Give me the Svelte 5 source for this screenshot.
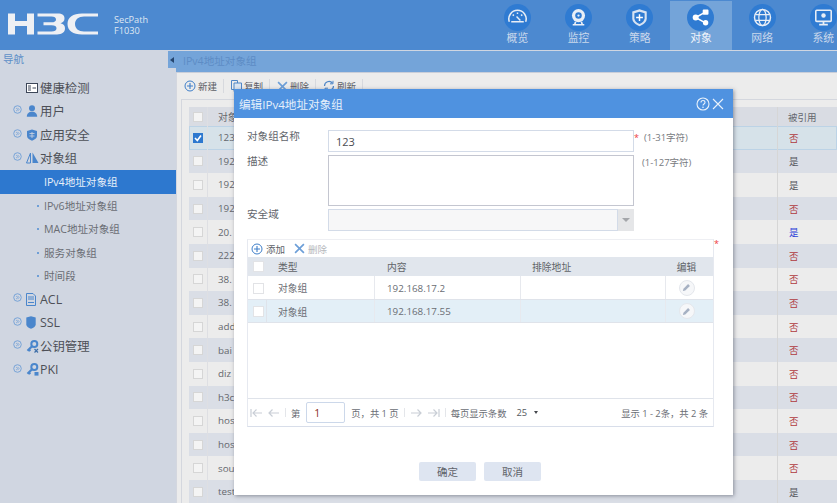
<script>
  const navItems = ['概览', '监控', '策略', '对象', '网络', '系统'];
  const rows = [
    ['123', '否', 'r'], ['192', '是', 'g'], ['192', '是', 'g'], ['192', '否', 'r'],
    ['20.', '是', 'b'], ['222', '否', 'r'], ['38.', '否', 'r'], ['38.', '否', 'r'],
    ['add', '否', 'r'], ['bai', '否', 'r'], ['diz', '否', 'r'], ['h3c', '否', 'r'],
    ['hos', '否', 'r'], ['hos', '否', 'r'], ['sou', '否', 'r'], ['test', '是', 'g']
  ];
  const subs = ['IPv6地址对象组', 'MAC地址对象组', '服务对象组', '时间段'];
  const lower = ['ACL', 'SSL', '公钥管理', 'PKI'];
  const inner = [['对象组', '192.168.17.2'], ['对象组', '192.168.17.55']];
</script>

{#snippet expander()}
  <svg class="exp" viewBox="0 0 10 10" width="9" height="9">
    <circle cx="5" cy="5" r="4.2" fill="none" stroke="#6f9fd6" stroke-width="1" />
    <path d="M3.4 3.2 5.2 5 3.4 6.8M5 3.2 6.8 5 5 6.8" fill="none" stroke="#6f9fd6" stroke-width=".8" />
  </svg>
{/snippet}

{#snippet plus()}
  <svg viewBox="0 0 12 12" width="12" height="12">
    <circle cx="6" cy="6" r="5" fill="none" stroke="#3f7fc9" stroke-width="1" />
    <path d="M3 6h6M6 3v6" stroke="#3f7fc9" stroke-width="1.1" />
  </svg>
{/snippet}

{#snippet cross()}
  <svg viewBox="0 0 10 10" width="11" height="11">
    <path d="M1 1l8 8M9 1l-8 8" stroke="#6d9fd8" stroke-width="1.5" />
  </svg>
{/snippet}

{#snippet navIcon(i)}
  <svg viewBox="0 0 28 28" width="27" height="27">
    <circle cx="14" cy="14" r="14" fill="#2f7bd2" />
    {#if i === 0}
      <path d="M5.5 18.5a9 9 0 1 1 17 0M7.5 18.5h13" fill="none" stroke="#e8eef6" stroke-width="1.6" />
      <path d="M13 13l4 4M9 11l1.3 1.1M14 8.8v1.6M19 11l-1.3 1.1" stroke="#e8eef6" stroke-width="1.5" />
    {:else if i === 1}
      <circle cx="14" cy="12" r="6.8" fill="#e8eef6" />
      <circle cx="14" cy="12" r="3.4" fill="#2f7bd2" />
      <circle cx="14" cy="12" r="1.2" fill="#e8eef6" />
      <path d="M8 21.5h12M11 18.5l-1 3M17 18.5l1 3" stroke="#e8eef6" stroke-width="1.7" />
    {:else if i === 2}
      <path d="M14 5.5l7.5 2.2v7c0 4-3.3 6.500-7.500 8.300-4.200-1.800-7.500-4.300-7.500-8.300v-7z" fill="#d7e3f2" />
      <path d="M14 8l5.300 1.500v5.200c0 2.800-2.300 4.600-5.300 6-3-1.400-5.300-3.200-5.300-6V9.500z" fill="#2f7bd2" />
      <path d="M10.500 14h7M14 10.500v7" stroke="#fff" stroke-width="1.500" />
    {:else if i === 3}
      <path d="M9 14l10-5.500M9 14l10 5.500" stroke="#fff" stroke-width="1.500" />
      <circle cx="9" cy="14" r="3.100" fill="#fff" />
      <rect x="16.300" y="5.800" width="6" height="5.400" rx="1" fill="#fff" />
      <circle cx="19.300" cy="19.500" r="2.800" fill="#fff" />
    {:else if i === 4}
      <circle cx="14" cy="14" r="8.300" fill="none" stroke="#e8eef6" stroke-width="1.500" />
      <ellipse cx="14" cy="14" rx="3.800" ry="8.300" fill="none" stroke="#e8eef6" stroke-width="1.300" />
      <path d="M6.500 11h15M6.500 17h15" stroke="#e8eef6" stroke-width="1.300" />
    {:else}
      <rect x="6" y="6.500" width="16" height="11.500" rx="1" fill="none" stroke="#e8eef6" stroke-width="1.600" />
      <circle cx="14" cy="12" r="2.300" fill="#e8eef6" />
      <path d="M14 18v3M9.500 21.500h9" stroke="#e8eef6" stroke-width="1.800" />
    {/if}
  </svg>
{/snippet}

<div class="page">
  <header class="top">
    <div class="brand">
      <svg class="logo" viewBox="0 0 90 22" width="90" height="22" role="img" aria-label="H3C">
        <path fill="#eef0f4" d="M0 .5h7v7.500h12V.5h7v21h-7v-8.500H7v8.500H0z" />
        <path fill="#eef0f4" transform="translate(-1.500 0)" d="M31 .500h20c5 0 7 1.800 7 5 0 2.400-1.500 4-4 4.800 3 .600 4.500 2.300 4.500 5 0 4-3 6.200-8 6.200H31v-3h14c3 0 5-1 5-3.200 0-2-1.500-3-5-3H37v-3h8c3 0 4.500-.900 4.500-2.800 0-1.900-1.600-2.900-4.500-2.900H31z" />
        <path fill="#eef0f4" d="M90 .500H74c-9 0-14.500 4-14.500 10.500S65 21.500 74 21.500h16v-3H76c-5.500 0-9-3-9-7.500s3.500-7.500 9-7.500h14z" />
      </svg>
      <div class="model"><span>SecPath</span><span>F1030</span></div>
    </div>
    <nav class="nav">
      {#each navItems as item, i}
        <div class="nav-item" class:active={i === 3}>
          {@render navIcon(i)}
          <span>{item}</span>
        </div>
      {/each}
    </nav>
  </header>

  <div class="body">
    <aside class="side">
      <div class="side-title">导航</div>
      <ul class="menu">
        <li class="top-item">
          <span class="exp-slot"></span>
          <svg class="mi" viewBox="0 0 12 10" width="12" height="10"><rect x=".5" y=".5" width="11" height="9" fill="#fff" stroke="#3c4658" /><path d="M2 3h3M2 5h3M2 7h3M6.500 5h3.500" stroke="#3c4658" /></svg>
          <span>健康检测</span>
        </li>
        <li class="top-item">
          {@render expander()}
          <svg class="mi" viewBox="0 0 12 12" width="12" height="12"><circle cx="6" cy="3.300" r="3" fill="#4a86cc" /><path d="M.8 11.800c0-3 2-5 5.200-5s5.200 2 5.200 5z" fill="#4a86cc" /></svg>
          <span>用户</span>
        </li>
        <li class="top-item">
          {@render expander()}
          <svg class="mi" viewBox="0 0 12 12" width="12" height="12"><path d="M6 .500l5 1.500v5c0 2.200-2.200 3.600-5 4.700C3.200 10.600 1 9.200 1 7V2z" fill="#4a86cc" /><path d="M3.500 4.500h5M3.500 7h5M6 3v6" stroke="#d0d6e1" stroke-width=".8" /></svg>
          <span>应用安全</span>
        </li>
        <li class="top-item">
          {@render expander()}
          <svg class="mi" viewBox="0 0 13 12" width="13" height="12"><path d="M4.500 1v10H.500z" fill="none" stroke="#4a86cc" /><path d="M6.500 .500l6 10.500h-6z" fill="#4a86cc" /></svg>
          <span>对象组</span>
        </li>
        <li class="sub selected">IPv4地址对象组</li>
        {#each subs as s}
          <li class="sub"><i class="dot"></i>{s}</li>
        {/each}
        {#each lower as item, i}
          <li class="top-item">
            {@render expander()}
            {#if i === 0}
              <svg class="mi" viewBox="0 0 10 13" width="10" height="13"><path d="M.5.500h6.500l2.500 2.500v9.500H.5z" fill="none" stroke="#4a86cc" /><path d="M2 4h6M2 6h6M2 9.500h6" stroke="#4a86cc" /></svg>
            {:else if i === 1}
              <svg class="mi" viewBox="0 0 10 13" width="10" height="13"><path d="M5 .3l4.700 1.200v7c0 2-2 3.200-4.700 4.200C2.300 11.700.3 10.500.3 8.500v-7z" fill="#4a86cc" /></svg>
            {:else}
              <svg class="mi" viewBox="0 0 13 13" width="13" height="13">
                <circle cx="8.300" cy="4" r="3" fill="none" stroke="#4a86cc" stroke-width="2" />
                <path d="M6.300 6 1.500 10.800M2.800 9.500l1.500 1.500" fill="none" stroke="#4a86cc" stroke-width="2.200" />
                {#if i === 2}
                  <path d="M8.500 9l3.500 3.500M12 9l-3.500 3.500" stroke="#3f6fa8" stroke-width="1.200" />
                {:else}
                  <rect x="8.500" y="9" width="4" height="3.600" fill="#4a86cc" />
                {/if}
              </svg>
            {/if}
            <span>{item}</span>
          </li>
        {/each}
      </ul>
    </aside>

    <button class="collapse" aria-label="折叠"><i></i></button>

    <main class="content">
      <div class="crumb">IPv4地址对象组</div>
      <div class="content-pad">
        <div class="tools">
          <span class="tool">{@render plus()}新建</span>
          <span class="tool">
            <svg viewBox="0 0 11 12" width="11" height="12"><path d="M.5.500h6v9h-6z" fill="none" stroke="#4f86c6" /><path d="M3 3h7.500v8.500H3z" fill="#dbe6f3" stroke="#4f86c6" /></svg>
            复制
          </span>
          <span class="tool">{@render cross()}删除</span>
          <span class="tool">
            <svg viewBox="0 0 12 12" width="12" height="12"><path d="M1.500 6a4.500 4.500 0 0 1 8-2.800M10.500 6a4.500 4.500 0 0 1-8 2.800" fill="none" stroke="#4f86c6" stroke-width="1.200" /><path d="M10 .8v3H7M2 11.200v-3h3" fill="none" stroke="#4f86c6" /></svg>
            刷新
          </span>
        </div>
        <div class="grid">
          <div class="row head">
            <span class="cb-cell"><i class="cb"></i></span>
            <span class="name">对象</span>
            <span class="ref">被引用</span>
          </div>
          {#each rows as [name, ref, tone], i}
            <div class="row" class:odd={i % 2 === 1} class:sel={i === 0}>
              <span class="cb-cell">
                {#if i === 0}
                  <i class="cb checked"><svg viewBox="0 0 10 10" width="10" height="10"><path d="M2 5l2.300 2.500L8 2.500" fill="none" stroke="#fff" stroke-width="1.600" /></svg></i>
                {:else}
                  <i class="cb"></i>
                {/if}
              </span>
              <span class="name">{name}</span>
              <span class="ref {tone}">{ref}</span>
            </div>
          {/each}
        </div>
      </div>
    </main>
  </div>

  <div class="modal">
    <div class="m-title">
      <span>编辑IPv4地址对象组</span>
      <span class="m-actions">
        <svg viewBox="0 0 14 14" width="14" height="14"><circle cx="7" cy="7" r="6" fill="none" stroke="#eaf2fb" stroke-width="1.100" /><path d="M5 5.500c0-1.300 1-2 2-2s2 .7 2 1.900c0 1.500-2 1.600-2 3.100" fill="none" stroke="#eaf2fb" stroke-width="1.100" /><circle cx="7" cy="10.300" r=".8" fill="#eaf2fb" /></svg>
        <svg viewBox="0 0 12 12" width="12" height="12"><path d="M1 1l10 10M11 1L1 11" stroke="#eaf2fb" stroke-width="1.100" /></svg>
      </span>
    </div>

    <div class="form">
      <label for="grp-name">对象组名称</label>
      <input id="grp-name" class="field" value="123" />
      <span class="hint"><b>*</b>(1-31字符)</span>

      <label for="grp-desc">描述</label>
      <textarea id="grp-desc" class="field ta"></textarea>
      <span class="hint second">(1-127字符)</span>

      <label for="grp-zone" class="zone-label">安全域</label>
      <div class="combo" id="grp-zone">
        <span class="combo-box"></span>
        <span class="combo-arrow"><i></i></span>
      </div>
      <span></span>
    </div>

    <div class="panel-wrap">
      <div class="panel">
        <div class="p-tools">
          <span class="p-tool">{@render plus()}添加</span>
          <span class="p-tool off">{@render cross()}删除</span>
        </div>
        <div class="p-row p-head">
          <span class="c0"><i class="cb"></i></span>
          <span class="c1">类型</span>
          <span class="c2">内容</span>
          <span class="c3">排除地址</span>
          <span class="c4">编辑</span>
        </div>
        {#each inner as [t, addr], i}
          <div class="p-row" class:hl={i === 1}>
            <span class="c0 bd"><i class="cb"></i></span>
            <span class="c1 bd">{t}</span>
            <span class="c2 bd">{addr}</span>
            <span class="c3 bd"></span>
            <span class="c4">
              <i class="pencil"><svg viewBox="0 0 10 10" width="9" height="9"><path d="M1 9l.6-2.600L6.800 1.200l2 2-5.200 5.200z" fill="#a6b1c3" /></svg></i>
            </span>
          </div>
        {/each}
        <div class="p-spacer"></div>
        <div class="pager">
          <span class="pg-icons">
            <svg viewBox="0 0 13 10" width="13" height="10"><path d="M1 1v8M12 5H3M6.500 1.500 3 5l3.500 3.500" fill="none" stroke="#c9ced6" stroke-width="1.200" /></svg>
            <svg viewBox="0 0 13 10" width="13" height="10"><path d="M12 5H2M5.500 1.500 2 5l3.500 3.500" fill="none" stroke="#c9ced6" stroke-width="1.200" /></svg>
          </span>
          <i class="sep"></i>
          <span>第</span>
          <span class="pg-input">1</span>
          <span class="pg-of">页，共 1 页</span>
          <i class="sep"></i>
          <span class="pg-icons">
            <svg viewBox="0 0 13 10" width="13" height="10"><path d="M1 5h10M7.500 1.500 11 5 7.500 8.500" fill="none" stroke="#c9ced6" stroke-width="1.200" /></svg>
            <svg viewBox="0 0 13 10" width="13" height="10"><path d="M12 1v8M1 5h9M6.500 1.500 10 5 6.500 8.500" fill="none" stroke="#c9ced6" stroke-width="1.200" /></svg>
          </span>
          <i class="sep"></i>
          <span>每页显示条数</span>
          <span class="pg-size">25</span>
          <i class="caret"></i>
          <span class="pg-total">显示 1 - 2条，共 2 条</span>
        </div>
      </div>
      <b class="panel-star">*</b>
    </div>

    <div class="m-foot">
      <button>确定</button>
      <button>取消</button>
    </div>
  </div>
</div>

<style>
  :global(body) {
    margin: 0;
  }
  .page {
    position: relative;
    width: 837px;
    height: 503px;
    overflow: hidden;
    display: flex;
    flex-direction: column;
    background: #d0d6e1;
    font-family: "Open Sans", "Noto Sans CJK SC", sans-serif;
    font-size: 10px;
    color: #5c5f66;
  }
  i {
    display: block;
    font-style: normal;
  }

  /* header */
  .top {
    height: 50px;
    flex: none;
    display: flex;
    justify-content: space-between;
    background: #4c89d0;
  }
  .brand {
    display: flex;
    align-items: center;
    gap: 16px;
    padding-left: 8px;
  }
  .logo {
    display: block;
    margin-bottom: 2px;
  }
  .model {
    display: flex;
    flex-direction: column;
    font-size: 9.200px;
    line-height: 11px;
    color: #dfe7f2;
  }
  .nav {
    display: flex;
    width: 367.200px;
    margin-right: -17px;
  }
  .nav-item {
    width: 61.200px;
    flex: none;
    padding-top: 4px;
    display: flex;
    flex-direction: column;
    align-items: center;
    font-size: 10.800px;
    line-height: 12px;
    color: #c9d8ec;
    gap: 1px;
  }
  .nav-item.active {
    background: #74a4d9;
    color: #f2f6fb;
    height: 49px;
    margin-top: 1px;
    padding-top: 3px;
    box-sizing: border-box;
  }
  .nav-item svg {
    display: block;
  }

  /* shell */
  .body {
    flex: 1;
    display: flex;
    min-height: 0;
    position: relative;
  }
  .side {
    width: 176px;
    flex: none;
    background: #d0d6e1;
  }
  .side-title {
    height: 21px;
    line-height: 19px;
    padding-left: 3px;
    font-size: 10.500px;
    color: #5f90c8;
  }
  .menu {
    list-style: none;
    margin: 0;
    padding: 5px 0 0;
  }
  .top-item {
    height: 23.500px;
    display: grid;
    grid-template-columns: 13px 14px 1fr;
    align-items: center;
    font-size: 12.400px;
    color: #4d5057;
    padding-left: 13px;
    box-sizing: border-box;
  }
  .exp {
    margin-top: -3px;
  }
  .mi {
    display: block;
  }
  .sub {
    height: 23.500px;
    display: flex;
    align-items: center;
    padding-left: 44px;
    font-size: 10.600px;
    color: #6a6d74;
    position: relative;
    box-sizing: border-box;
  }
  .sub.selected {
    background: #2d78cf;
    color: #e9f0f9;
  }
  .dot {
    position: absolute;
    left: 37px;
    top: 11px;
    width: 2px;
    height: 2px;
    background: #6f9fd6;
  }
  .collapse {
    position: absolute;
    left: 168px;
    top: 1px;
    width: 8px;
    height: 17px;
    padding: 0;
    border: 0;
    background: #74a4d9;
  }
  .collapse i {
    width: 0;
    height: 0;
    margin-left: 2px;
    border: 3px solid transparent;
    border-right: 4px solid #25456e;
    border-left: 0;
  }

  /* page behind */
  .content {
    flex: 1;
    min-width: 0;
    background: #ececec;
    display: flex;
    flex-direction: column;
    margin-top: 1px;
  }
  .crumb {
    height: 21px;
    flex: none;
    background: #74a4d9;
    padding-left: 7px;
    line-height: 21px;
    font-size: 10.600px;
    color: #5d8cc5;
    border-bottom: 1px solid #c9ced9;
  }
  .content-pad {
    padding: 4px 0 0 4px;
    border-left: 1px solid #d4d7df;
  }
  .tools {
    height: 18px;
    display: flex;
    align-items: center;
    gap: 7px;
    padding-left: 3px;
    margin-bottom: 4px;
    font-size: 9.500px;
    color: #5c5f66;
  }
  .tool {
    display: flex;
    align-items: center;
    gap: 2px;
    padding-right: 6px;
    border-right: 1px solid #d7d9de;
  }
  .grid {
    border-top: 1px solid #d4d7de;
    border-left: 1px solid #d4d7de;
    padding: 7px 0 0 7px;
  }
  .row {
    display: flex;
    align-items: center;
    height: 23.600px;
    color: #64676d;
    font-size: 9.800px;
  }
  .row.head {
    height: 19px;
    background: #d9dce3;
  }
  .row.odd {
    background: #dadee6;
  }
  .row.sel {
    background: #d6e2e9;
    box-shadow: inset 0 0 0 1px #bcd3e6;
  }
  .cb-cell {
    width: 19px;
    height: 100%;
    display: flex;
    align-items: center;
    padding-left: 4px;
    box-sizing: border-box;
    border-right: 1px solid #dedfe3;
  }
  .cb {
    width: 10px;
    height: 10px;
    box-sizing: border-box;
    background: #f4f4f4;
    border: 1px solid #d6d6d6;
  }
  .cb.checked {
    background: #2d78cf;
    border-color: #2d78cf;
  }
  .cb.checked svg {
    display: block;
    margin: -1px;
  }
  .name {
    flex: 1;
    padding-left: 10px;
  }
  .ref {
    width: 60px;
    height: 100%;
    display: flex;
    align-items: center;
    padding-left: 11px;
    box-sizing: border-box;
    border-left: 1px solid #d6d6d6;
    font-size: 9.500px;
  }
  .head .ref {
    padding-left: 10px;
  }
  .r {
    color: #b03a3e;
  }
  .g {
    color: #55585e;
  }
  .b {
    color: #2b3fd8;
  }

  /* modal */
  .modal {
    position: absolute;
    left: 234px;
    top: 89px;
    width: 499px;
    height: 406px;
    display: flex;
    flex-direction: column;
    background: #fff;
    box-shadow: 1px 1px 4px rgba(70, 75, 90, .55);
  }
  .m-title {
    height: 29px;
    flex: none;
    display: flex;
    align-items: center;
    justify-content: space-between;
    padding: 0 9px 0 5px;
    background: #4f92e0;
    color: #e6f0fb;
    font-size: 11.600px;
  }
  .m-actions {
    display: flex;
    align-items: center;
    gap: 2px;
  }
  .m-actions svg {
    display: block;
  }
  .form {
    display: grid;
    grid-template-columns: 81px 306px 1fr;
    grid-template-rows: 22px 51px 22px;
    row-gap: 3px;
    padding: 12px 0 0 13px;
  }
  label {
    font-size: 10.600px;
    line-height: 13px;
    color: #62656b;
  }
  .zone-label {
    margin-top: -1px;
  }
  .field {
    width: 100%;
    height: 100%;
    box-sizing: border-box;
    margin: 0;
    padding: 0 7px;
    font: inherit;
    font-size: 11px;
    color: #4a4c52;
    background: #fff;
    border: 1px solid #d3dbe8;
    outline: 0;
    display: block;
  }
  .ta {
    border-color: #c4c6d0;
    resize: none;
  }
  .hint {
    font-size: 9.500px;
    line-height: 13px;
    color: #777a80;
    padding-top: 1px;
    display: flex;
    gap: 5px;
  }
  .hint b,
  .panel-star {
    font-weight: 400;
    color: #ee3a3a;
    font-size: 9px;
  }
  .hint.second {
    padding-left: 8px;
  }
  .combo {
    display: flex;
  }
  .combo-box {
    flex: 1;
    background: #f7f7f8;
    border: 1px solid #d3dbe8;
  }
  .combo-arrow {
    width: 16px;
    flex: none;
    background: #e5e6e8;
    display: flex;
    align-items: center;
    justify-content: center;
  }
  .combo-arrow i {
    width: 0;
    height: 0;
    border: 4px solid transparent;
    border-top: 4px solid #a4a6aa;
    border-bottom: 0;
  }
  .panel-wrap {
    display: flex;
    padding: 8px 0 0 13px;
  }
  .panel {
    width: 467px;
    height: 188px;
    box-sizing: border-box;
    display: flex;
    flex-direction: column;
    border: 1px solid #e6e9f0;
    border-bottom-color: #d8deea;
    border-top-color: #eeeff3;
  }
  .panel-star {
    line-height: 10px;
  }
  .p-tools {
    height: 17px;
    flex: none;
    display: flex;
    align-items: center;
    gap: 9px;
    padding-left: 3px;
    font-size: 9.500px;
    color: #5c5f66;
  }
  .p-tool {
    display: flex;
    align-items: center;
    gap: 3px;
  }
  .p-tool.off {
    color: #b5b7bc;
  }
  .p-row {
    display: grid;
    grid-template-columns: 19px 108px 146px 145px 1fr;
    height: 24px;
    border-bottom: 1px solid #dfe3ea;
    box-sizing: border-box;
    font-size: 9.800px;
    color: #6a6d74;
  }
  .p-row.hl {
    background: #e3eff7;
    height: 23px;
  }
  .p-row.p-head {
    height: 19px;
    background: #e1e6ed;
    border-bottom: 0;
    color: #606368;
  }
  .p-row > span {
    display: flex;
    align-items: center;
    min-width: 0;
  }
  .p-row > .bd {
    padding-top: 1px;
  }
  .c0 {
    padding-left: 5px;
  }
  .c1 {
    padding-left: 11px;
  }
  .c2 {
    padding-left: 12px;
  }
  .c3 {
    padding-left: 11px;
  }
  .p-row .c4 {
    justify-content: center;
    padding-right: 6px;
  }
  .hl .c0.bd {
    border-right: 1px solid #dfe3ea;
  }
  .c1.bd,
  .c2.bd,
  .c3.bd {
    border-right: 1px solid #e7e9ee;
  }
  .p-row .cb {
    width: 11px;
    height: 11px;
    background: #fff;
    border-color: #e2e3e6;
  }
  .pencil {
    width: 14px;
    height: 14px;
    border-radius: 50%;
    background: #f6f7f9;
    border: 1px solid #e4e7ec;
    display: flex;
    align-items: center;
    justify-content: center;
  }
  .pencil svg {
    display: block;
  }
  .p-spacer {
    flex: 1;
  }
  .pager {
    height: 27px;
    flex: none;
    display: flex;
    align-items: center;
    padding: 0 5px 0 2px;
    border-top: 1px solid #dfe3ea;
    font-size: 9.300px;
    color: #6a6d74;
  }
  .pg-icons {
    display: flex;
    gap: 4px;
  }
  .pg-icons svg {
    display: block;
  }
  .sep {
    width: 1px;
    height: 9px;
    background: #e4e6ea;
    margin: 0 5px;
  }
  .pg-input {
    width: 39px;
    height: 21px;
    box-sizing: border-box;
    margin-left: 6px;
    padding-left: 7px;
    line-height: 20px;
    border: 1px solid #ccd8ea;
    border-radius: 2px;
    color: #8a2a20;
    font-size: 10.500px;
  }
  .pg-of {
    margin-left: 6px;
  }
  .pg-size {
    margin-left: 10px;
    color: #55585e;
  }
  .caret {
    margin-left: 7px;
    width: 0;
    height: 0;
    border: 2.500px solid transparent;
    border-top: 3px solid #44474d;
    border-bottom: 0;
  }
  .pg-total {
    margin-left: auto;
  }
  .m-foot {
    margin-top: 35px;
    display: flex;
    justify-content: center;
    gap: 8px;
    padding-right: 7px;
  }
  .m-foot button {
    width: 57px;
    height: 19px;
    padding: 0;
    border: 0;
    border-radius: 2px;
    background: #dee5f1;
    font: inherit;
    font-size: 10.500px;
    color: #60636a;
  }
</style>
